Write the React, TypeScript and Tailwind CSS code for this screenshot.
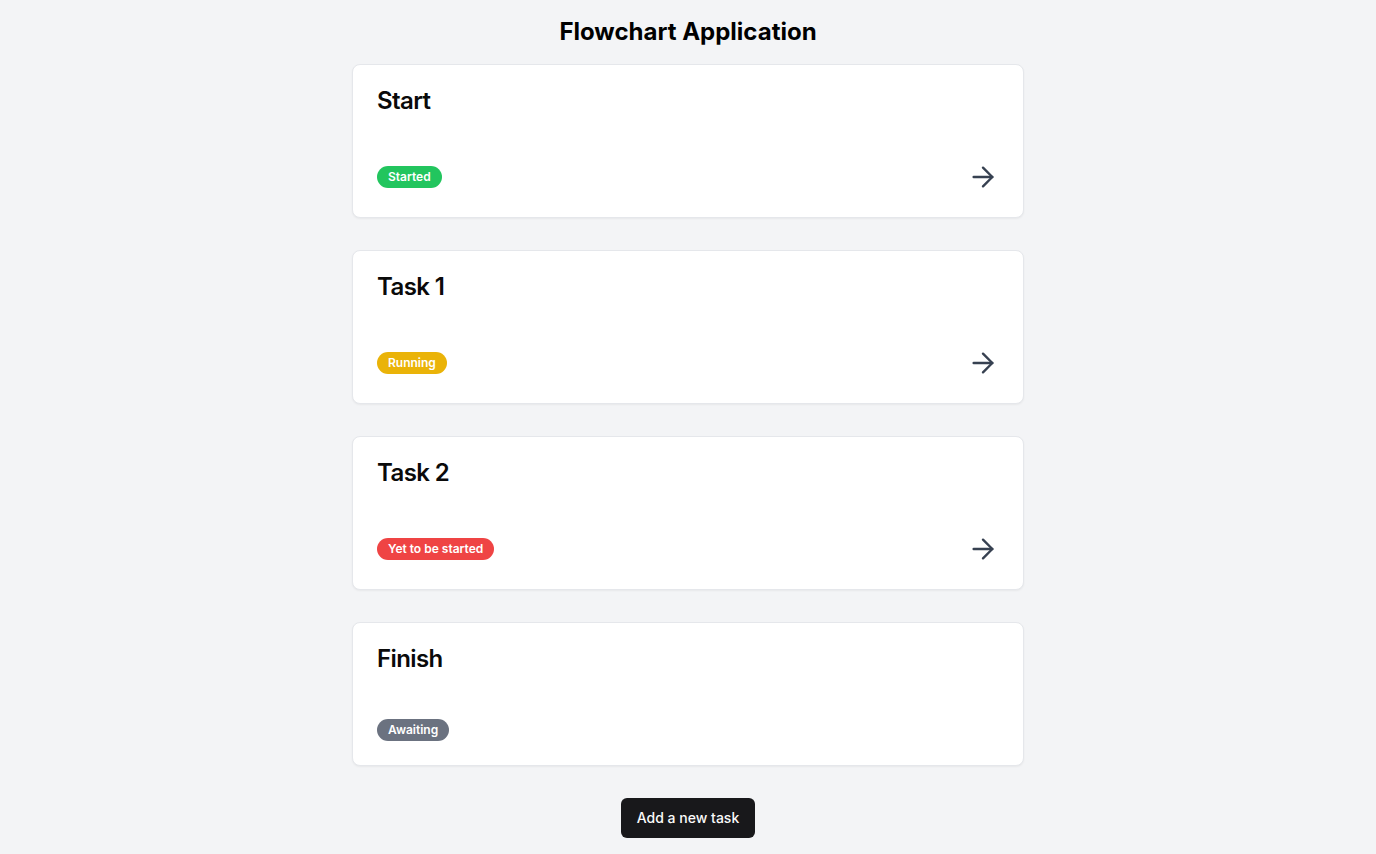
import React from 'react';
import { ArrowRight } from 'lucide-react';

type Task = {
  title: string;
  status: string;
  badge: string;
  next: boolean;
};

const tasks: Task[] = [
  { title: 'Start', status: 'Started', badge: 'bg-[#22c55e]', next: true },
  { title: 'Task 1', status: 'Running', badge: 'bg-[#eab308]', next: true },
  { title: 'Task 2', status: 'Yet to be started', badge: 'bg-[#ef4444]', next: true },
  { title: 'Finish', status: 'Awaiting', badge: 'bg-[#6b7280]', next: false },
];

const TaskCard: React.FC<{ task: Task }> = ({ task }) => (
  <div className="rounded-lg border border-[#e5e7eb] bg-white shadow-xs">
    <div className="p-6">
      <h3 className="text-2xl font-semibold leading-none tracking-tight text-[#0a0a0a]">{task.title}</h3>
    </div>
    <div className="px-6 pb-6" />
    <div className="flex items-center justify-between px-6 pb-6">
      <span
        className={`inline-flex items-center rounded-full border border-transparent px-2.5 py-0.5 text-xs font-semibold text-white ${task.badge}`}
      >
        {task.status}
      </span>
      {task.next && (
        <button className="flex h-8 w-8 items-center justify-center text-[#374151]">
          <ArrowRight className="h-8 w-8" strokeWidth={1.8} />
        </button>
      )}
    </div>
  </div>
);

export default function App() {
  return (
    <div className="min-h-screen bg-[#f3f4f6] p-4 font-['Inter',sans-serif]">
      <h1 className="mb-4 text-center text-2xl font-bold text-black">Flowchart Application</h1>
      <div className="mx-auto flex max-w-2xl flex-col gap-8">
        {tasks.map((t) => (
          <TaskCard key={t.title} task={t} />
        ))}
      </div>
      <div className="mt-8 flex justify-center">
        <button className="h-10 rounded-md bg-[#18181b] px-4 text-sm font-medium text-[#fafafa]">
          Add a new task
        </button>
      </div>
    </div>
  );
}
